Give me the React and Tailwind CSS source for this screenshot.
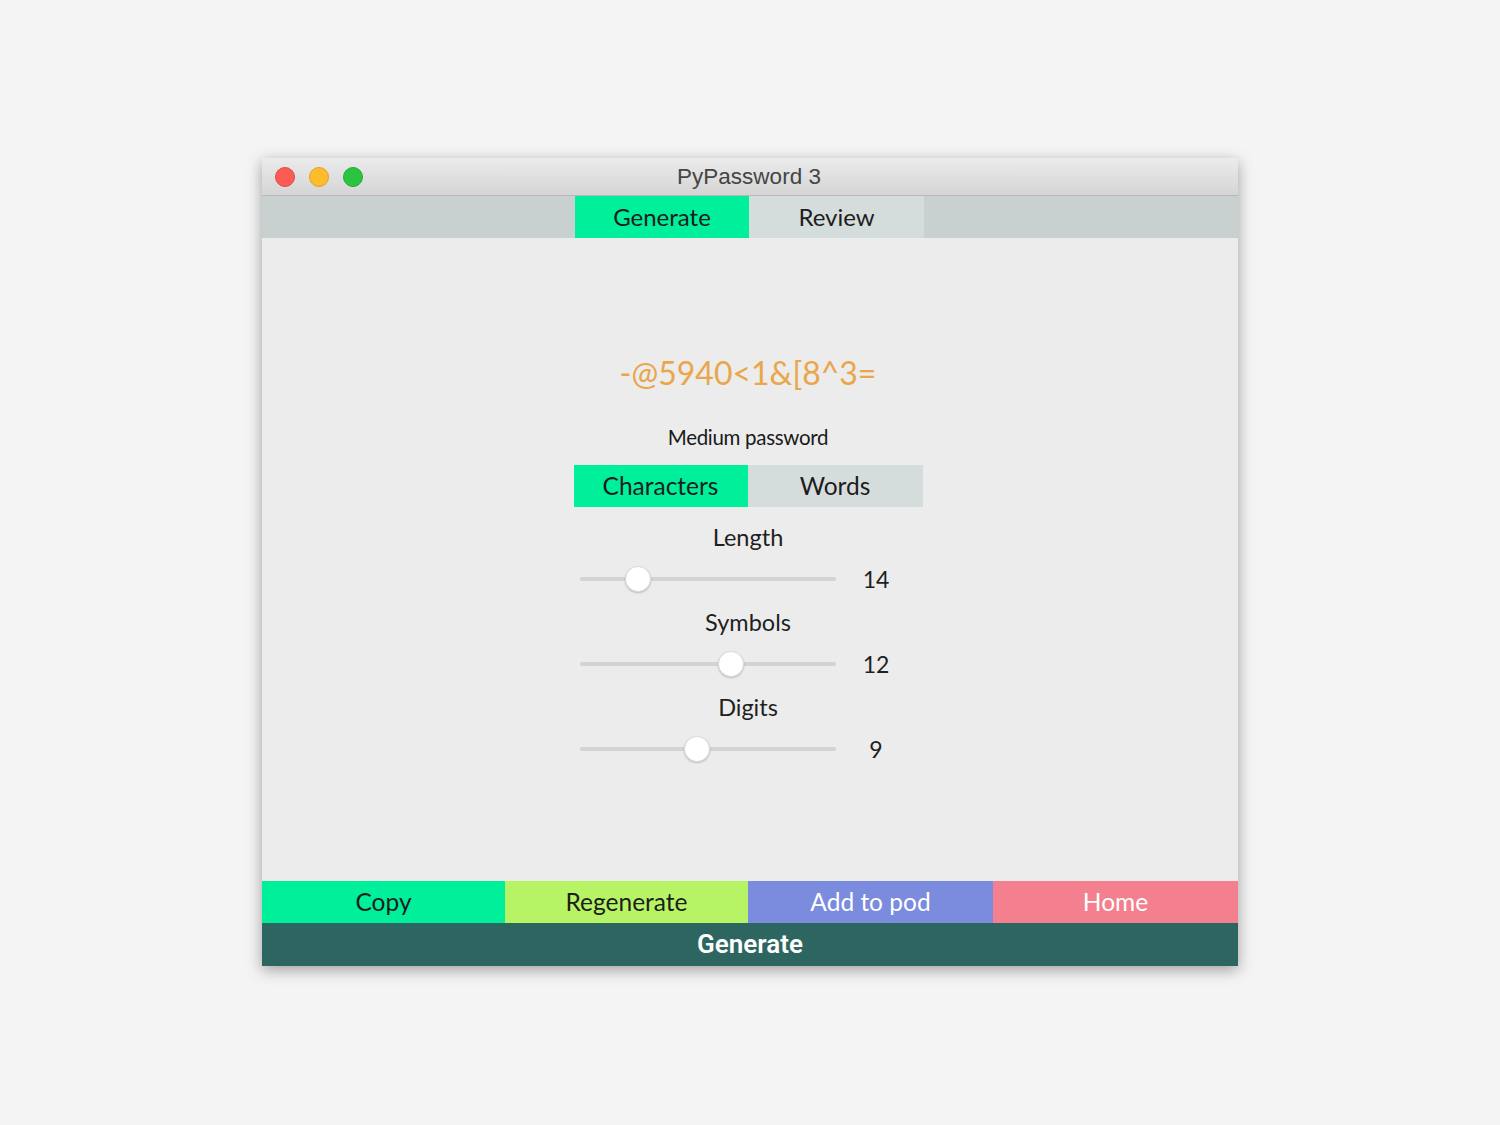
import React from "react";

const SLIDERS = [
  { label: "Length", value: 14, pos: 58 },
  { label: "Symbols", value: 12, pos: 151 },
  { label: "Digits", value: 9, pos: 117 },
];

const BUTTONS = [
  { label: "Copy", cls: "bg-[#00ef9a] text-[#1d1d1d]" },
  { label: "Regenerate", cls: "bg-[#b6f465] text-[#1d1d1d]" },
  { label: "Add to pod", cls: "bg-[#7b8bde] text-white" },
  { label: "Home", cls: "bg-[#f47f8f] text-white" },
];

function Slider({ label, value, pos }) {
  return (
    <div className="flex flex-col items-center">
      <div className="h-[28px] leading-[28px] text-[23.5px] text-[#1f1f1f]">{label}</div>
      <div className="w-[336px] h-[28px] mt-[14px] flex items-center">
        <div className="relative w-[256px] h-[4px] rounded-full bg-[#d3d3d3]">
          <div
            className="absolute top-1/2 w-[26px] h-[26px] -ml-[13px] -mt-[13px] rounded-full bg-white border border-[#dcdcdc] shadow-[0_1px_2px_rgba(0,0,0,0.2)]"
            style={{ left: pos }}
          />
        </div>
        <div className="w-[40px] ml-[20px] text-center text-[23px] text-[#1f1f1f]">{value}</div>
      </div>
    </div>
  );
}

export default function App() {
  return (
    <div
      className="min-h-[1125px] bg-[#f4f4f4] pt-[158px]"
      style={{ fontFamily: "Lato, 'Noto Sans', sans-serif" }}
    >
      <div className="w-[976px] mx-auto bg-[#ececec] shadow-[0_4px_14px_rgba(0,0,0,0.35)]">
        {/* title bar */}
        <div className="relative h-[38px] bg-gradient-to-b from-[#ebebeb] to-[#d5d5d5] border-b border-[#b9b9b9] flex items-center justify-center">
          <div className="absolute left-[13px] top-[9px] flex gap-[14px]">
            <span className="w-[20px] h-[20px] rounded-full bg-[#fd5b55] border border-[#e04a44]" />
            <span className="w-[20px] h-[20px] rounded-full bg-[#fdbb2e] border border-[#e0a224]" />
            <span className="w-[20px] h-[20px] rounded-full bg-[#2ac53f] border border-[#24a934]" />
          </div>
          <span
            className="text-[22.5px] text-[#454545] ml-[-2px]"
            style={{ fontFamily: "'Liberation Sans', Arial, sans-serif" }}
          >
            PyPassword 3
          </span>
        </div>

        {/* tabs */}
        <div className="h-[42px] bg-[#c9d1d0] flex justify-center">
          <div className="w-[174px] ml-[-1px] bg-[#00ef9a] flex items-center justify-center text-[24px] text-[#1d1d1d]">
            Generate
          </div>
          <div className="w-[175px] bg-[#d5dcdc] flex items-center justify-center text-[24px] text-[#1d1d1d]">
            Review
          </div>
        </div>

        {/* content */}
        <div className="h-[643px] flex flex-col items-center pr-[4px]">
          <div className="mt-[115px] h-[40px] leading-[40px] text-[32px] text-[#eaa64a]">
            -@5940&lt;1&amp;[8^3=
          </div>
          <div className="mt-[32px] h-[24px] leading-[24px] text-[20.5px] text-[#1a1a1a] tracking-[-0.3px]">
            Medium password
          </div>
          <div className="mt-[16px] flex h-[42px]">
            <div className="w-[174px] bg-[#00ef9a] flex items-center justify-center text-[24.5px] text-[#1d1d1d]">
              Characters
            </div>
            <div className="w-[175px] bg-[#d5dcdc] flex items-center justify-center text-[24.5px] text-[#1d1d1d]">
              Words
            </div>
          </div>
          <div className="mt-[16px] flex flex-col gap-[15px]">
            {SLIDERS.map((s) => (
              <Slider key={s.label} {...s} />
            ))}
          </div>
        </div>

        {/* action buttons */}
        <div className="grid grid-cols-[243px_243px_245px_1fr] h-[42px]">
          {BUTTONS.map((b) => (
            <div key={b.label} className={`flex items-center justify-center text-[24.5px] ${b.cls}`}>
              {b.label}
            </div>
          ))}
        </div>
        <div
          className="h-[43px] bg-[#2d6660] flex items-center justify-center text-[26px] font-semibold text-white"
          style={{ fontFamily: "Roboto, 'Liberation Sans', sans-serif" }}
        >
          Generate
        </div>
      </div>
    </div>
  );
}
